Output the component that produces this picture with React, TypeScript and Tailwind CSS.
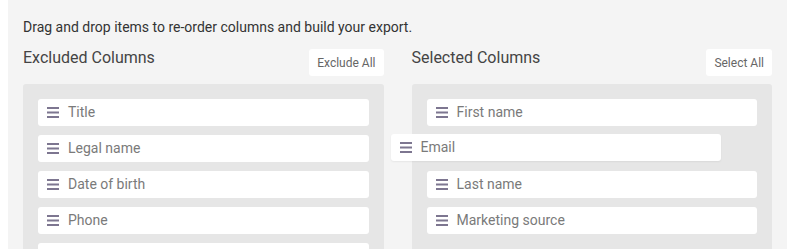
import React from "react";

const excluded = ["Title", "Legal name", "Date of birth", "Phone", ""];
const selected = ["First name", "Email", "Last name", "Marketing source"];

function DragIcon() {
  return (
    <svg width="12" height="11" viewBox="0 0 12 11" className="shrink-0">
      <rect x="0" y="0" width="12" height="2" fill="#7d7690" />
      <rect x="0" y="4.5" width="12" height="2" fill="#7d7690" />
      <rect x="0" y="9" width="12" height="2" fill="#7d7690" />
    </svg>
  );
}

function Item({ label, dragging }: { label: string; dragging?: boolean }) {
  return (
    <div
      className={`h-[27px] shrink-0 bg-white rounded-[3px] flex items-center gap-[9px] pl-[9px] text-[14px] text-[#7a7a7a] ${
        dragging ? "relative -translate-x-[36px] -translate-y-[1px] shadow-[0_1px_2px_rgba(0,0,0,0.06)]" : ""
      }`}
    >
      <DragIcon />
      {label && <span>{label}</span>}
    </div>
  );
}

function Column({ title, action, items, dragging }: {
  title: string;
  action: string;
  items: string[];
  dragging?: string;
}) {
  return (
    <div>
      <div className="flex justify-between items-start">
        <h2 className="text-[16px] leading-[24px] font-normal text-[#444]">{title}</h2>
        <button className="mt-[3px] h-[27px] px-[8px] bg-white rounded-[3px] text-[12px] text-[#666]">
          {action}
        </button>
      </div>
      <div className="mt-[8px] bg-[#e6e6e6] rounded-[3px] p-[15px] flex flex-col gap-[9px] min-h-[200px]">
        {items.map((it, i) => (
          <Item key={i} label={it} dragging={it === dragging} />
        ))}
      </div>
    </div>
  );
}

export default function App() {
  return (
    <div className="h-[249px] overflow-hidden bg-white pl-2 pr-[13px]" style={{ fontFamily: "Roboto, 'Liberation Sans', sans-serif" }}>
      <div className="bg-[#f4f4f4] h-full px-[15px] pt-[17px]">
        <p className="text-[14px] leading-[20px] text-[#333]">
          Drag and drop items to re-order columns and build your export.
        </p>
        <div className="mt-[9px] grid grid-cols-2 gap-[28px]">
          <Column title="Excluded Columns" action="Exclude All" items={excluded} />
          <Column title="Selected Columns" action="Select All" items={selected} dragging="Email" />
        </div>
      </div>
    </div>
  );
}
